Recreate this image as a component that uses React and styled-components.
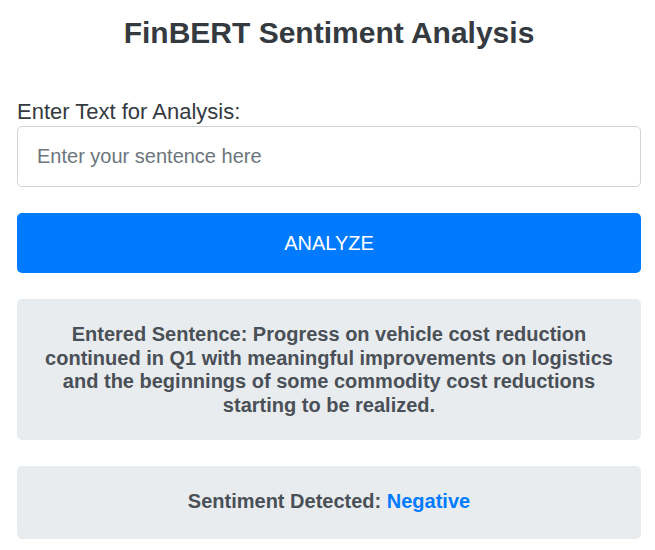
import React, { useState } from 'react'
import styled, { createGlobalStyle } from 'styled-components'

const GlobalStyle = createGlobalStyle`
  html, body {
    margin: 0;
    padding: 0;
    background: #ffffff;
    font-family: "Liberation Sans", Arial, sans-serif;
  }
`

const Page = styled.div`
  width: 624px;
  margin: 0 0 0 17px;
  padding-top: 15px;
  display: flex;
  flex-direction: column;
`

const Title = styled.h1`
  margin: 0 0 49px 0;
  text-align: center;
  font-size: 30px;
  font-weight: bold;
  color: #343a40;
  line-height: 36px;
`

const Label = styled.label`
  font-size: 22px;
  color: #343a40;
  line-height: 24px;
  margin-bottom: 2px;
`

const Input = styled.input`
  box-sizing: border-box;
  height: 61px;
  width: 100%;
  padding: 0 19px;
  font-size: 20px;
  font-family: "Liberation Sans", Arial, sans-serif;
  border: 1px solid #ced4da;
  border-radius: 5px;
  outline: none;
  color: #495057;
  &::placeholder {
    color: #6c757d;
  }
`

const Button = styled.button`
  margin-top: 26px;
  height: 60px;
  width: 100%;
  border: none;
  border-radius: 5px;
  background: #007bff;
  color: #ffffff;
  font-size: 20px;
  font-family: "Liberation Sans", Arial, sans-serif;
  text-transform: uppercase;
  cursor: pointer;
`

const ResultBox = styled.div`
  margin-top: 26px;
  background: #e9ecef;
  border-radius: 5px;
  padding: ${p => p.$pad};
  text-align: center;
  font-size: 20px;
  font-weight: bold;
  line-height: 23.5px;
  color: #495057;
`

const Sentiment = styled.span`
  color: #007bff;
`

export default function App() {
  const [text, setText] = useState('')
  const sentence = 'Progress on vehicle cost reduction continued in Q1 with meaningful improvements on logistics and the beginnings of some commodity cost reductions starting to be realized.'

  return (
    <>
      <GlobalStyle />
      <Page>
        <Title>FinBERT Sentiment Analysis</Title>
        <Label htmlFor="sentence">Enter Text for Analysis:</Label>
        <Input
          id="sentence"
          placeholder="Enter your sentence here"
          value={text}
          onChange={e => setText(e.target.value)}
        />
        <Button>Analyze</Button>
        <ResultBox $pad="24px 20px 23px">
          Entered Sentence: {sentence}
        </ResultBox>
        <ResultBox $pad="24px 20px 25px">
          Sentiment Detected: <Sentiment>Negative</Sentiment>
        </ResultBox>
      </Page>
    </>
  )
}
